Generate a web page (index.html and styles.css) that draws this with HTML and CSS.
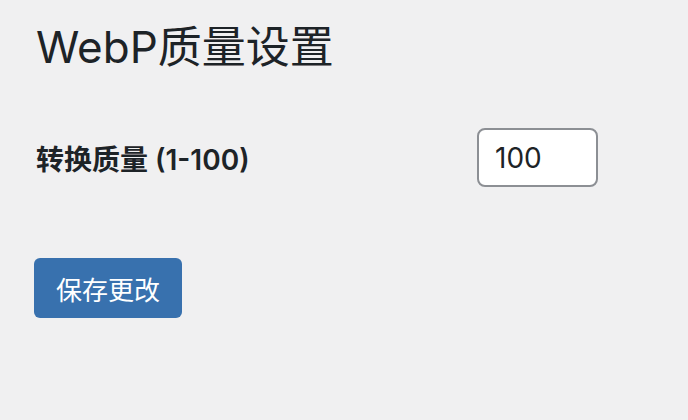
FILE: index.html
```html
<!DOCTYPE html>
<html lang="zh-CN">
<head>
  <meta charset="UTF-8">
  <meta name="viewport" content="width=device-width, initial-scale=1.0">
  <title>WebP质量设置</title>
  <link rel="stylesheet" href="styles.css">
</head>
<body>

  <div class="wrap">
    <h1>WebP质量设置</h1>
    <form class="settings-form">
      <div class="field-row">
        <label for="quality">转换质量 (1-100)</label>
        <input type="number" id="quality" name="quality" value="100" min="1" max="100">
      </div>
      <button type="submit" class="save-btn">保存更改</button>
    </form>
  </div>

</body>
</html>
```

FILE: styles.css
```css
/* Reset default styles */
* {
  margin: 0;
  padding: 0;
  box-sizing: border-box;
}

/* Body Styling */
body {
  font-family: Inter, "Noto Sans CJK SC", sans-serif;
  background: #f0f0f1;
  color: #1d2327;
}

/* Page Wrapper */
.wrap {
  padding: 20px 34px 0;
}

/* Title Styling */
.wrap h1 {
  font-size: 44px;
  font-weight: 400;
  line-height: 54px;
  padding-left: 2px;
}

/* Field Row */
.field-row {
  display: flex;
  align-items: center;
  margin-top: 54px;
}

.field-row label {
  width: 443px;
  padding-left: 2px;
  font-size: 28px;
  font-weight: 600;
}

.field-row input {
  width: 121px;
  height: 59px;
  padding: 0 16px;
  font-family: inherit;
  font-size: 28px;
  color: #1d2327;
  background: #fff;
  border: 2px solid #8c8f94;
  border-radius: 8px;
  outline: none;
  -moz-appearance: textfield;
}

.field-row input::-webkit-outer-spin-button,
.field-row input::-webkit-inner-spin-button {
  -webkit-appearance: none;
}

/* Save Button */
.save-btn {
  display: block;
  margin-top: 71px;
  width: 148px;
  height: 60px;
  font-family: inherit;
  font-size: 26px;
  color: #fff;
  background: #3871ae;
  border: none;
  border-radius: 6px;
  cursor: pointer;
}
```
